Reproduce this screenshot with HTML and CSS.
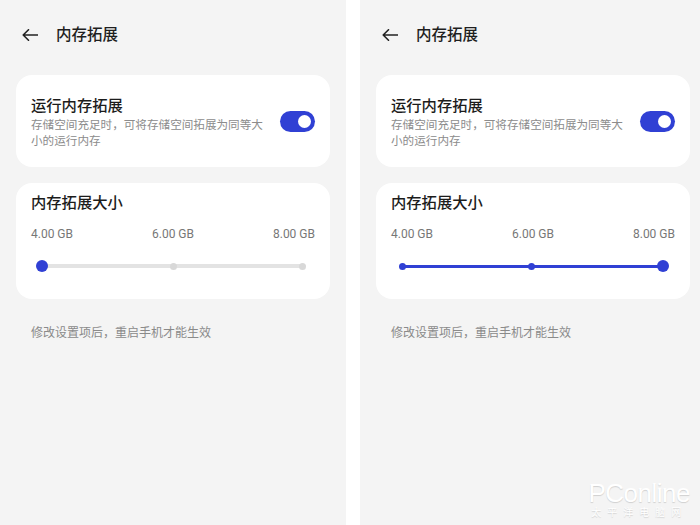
FILE: index.html
```html
<!DOCTYPE html>
<html lang="zh-CN">
<head>
<meta charset="UTF-8">
<meta name="viewport" content="width=device-width, initial-scale=1.0">
<title>内存拓展</title>
<link rel="stylesheet" href="styles.css">
</head>
<body>

<div class="compare">
    <section class="screen screen-left">
        <header class="topbar">
            <svg class="back" width="16" height="12" viewBox="0 0 16 12">
                <path d="M15.5 6H1.2M6.5 0.8L1.2 6l5.3 5.2" fill="none" stroke="#222" stroke-width="1.6" stroke-linecap="round" stroke-linejoin="round"/>
            </svg>
            <h1>内存拓展</h1>
        </header>

        <div class="card card-switch">
            <div class="switch-text">
                <h2>运行内存拓展</h2>
                <p>存储空间充足时，可将存储空间拓展为同等大小的运行内存</p>
            </div>
            <span class="toggle"><span class="knob"></span></span>
        </div>

        <div class="card card-size">
            <h2>内存拓展大小</h2>
            <div class="labels">
                <span>4.00 GB</span>
                <span>6.00 GB</span>
                <span>8.00 GB</span>
            </div>
            <div class="slider">
                <span class="dot dot-active"></span>
                <span class="dot"></span>
                <span class="dot"></span>
            </div>
        </div>

        <p class="note">修改设置项后，重启手机才能生效</p>
    </section>

    <div class="divider"></div>

    <section class="screen screen-right">
        <header class="topbar">
            <svg class="back" width="16" height="12" viewBox="0 0 16 12">
                <path d="M15.5 6H1.2M6.5 0.8L1.2 6l5.3 5.2" fill="none" stroke="#222" stroke-width="1.6" stroke-linecap="round" stroke-linejoin="round"/>
            </svg>
            <h1>内存拓展</h1>
        </header>

        <div class="card card-switch">
            <div class="switch-text">
                <h2>运行内存拓展</h2>
                <p>存储空间充足时，可将存储空间拓展为同等大小的运行内存</p>
            </div>
            <span class="toggle"><span class="knob"></span></span>
        </div>

        <div class="card card-size">
            <h2>内存拓展大小</h2>
            <div class="labels">
                <span>4.00 GB</span>
                <span>6.00 GB</span>
                <span>8.00 GB</span>
            </div>
            <div class="slider slider-full">
                <span class="dot dot-small"></span>
                <span class="dot dot-small"></span>
                <span class="dot dot-active"></span>
            </div>
        </div>

        <p class="note">修改设置项后，重启手机才能生效</p>

        <div class="watermark">
            <span class="wm-logo">PConline</span>
            <span class="wm-sub">太平洋电脑网</span>
        </div>
    </section>
</div>

</body>
</html>
```

FILE: styles.css
```css
body {
    margin: 0;
    padding: 0;
    font-family: Roboto, "Noto Sans CJK SC", sans-serif;
    background-color: #ffffff;
}

.compare {
    display: flex;
    width: 700px;
    height: 525px;
    overflow: hidden;
}

.screen {
    position: relative;
    background-color: #f4f4f4;
    height: 525px;
    padding: 0 0 0 16px;
    box-sizing: border-box;
}

.screen-left {
    width: 346px;
}

.screen-right {
    width: 340px;
}

.divider {
    width: 14px;
    background-color: #ffffff;
}

.topbar {
    display: flex;
    align-items: center;
    height: 24px;
    padding: 23px 0 0 6px;
    margin-bottom: 28px;
}

.topbar .back {
    display: block;
}

.topbar h1 {
    margin: 0 0 0 18px;
    font-size: 15.5px;
    font-weight: 500;
    line-height: 24px;
    color: #1e1e1e;
}

.card {
    width: 314px;
    box-sizing: border-box;
    background-color: #ffffff;
    border-radius: 16px;
}

.card h2 {
    margin: 0;
    font-size: 15.3px;
    font-weight: 500;
    line-height: 22px;
    color: #1c1c1c;
}

.card-switch {
    display: flex;
    align-items: center;
    height: 92px;
    padding: 0 15px;
}

.switch-text {
    flex: 1;
    padding-right: 10px;
    padding-top: 1px;
}

.switch-text p {
    margin: 0;
    font-size: 11.6px;
    line-height: 16px;
    color: #8c8c8c;
}

.toggle {
    position: relative;
    width: 35px;
    height: 21px;
    border-radius: 11px;
    background-color: #3040d4;
    flex-shrink: 0;
}

.toggle .knob {
    position: absolute;
    top: 4px;
    right: 4px;
    width: 13px;
    height: 13px;
    border-radius: 50%;
    background-color: #ffffff;
}

.card-size {
    margin-top: 16px;
    height: 116px;
    padding: 9px 15px 0;
}

.labels {
    display: flex;
    justify-content: space-between;
    margin-top: 12px;
    font-size: 12px;
    line-height: 16px;
    color: #777777;
}

.slider {
    position: relative;
    display: flex;
    justify-content: space-between;
    align-items: center;
    height: 24px;
    margin: 12px 12px 0 11px;
}

.slider::before {
    content: "";
    position: absolute;
    left: 0;
    right: 0;
    top: 10px;
    height: 4px;
    border-radius: 2px;
    background-color: #e3e3e3;
}

.slider .dot {
    position: relative;
    width: 7px;
    height: 7px;
    border-radius: 50%;
    background-color: #d8d8d8;
}

.slider .dot:first-child {
    margin-left: -3px;
}

.slider .dot:last-child {
    margin-right: -3px;
}

.slider .dot-active {
    width: 12px;
    height: 12px;
    background-color: #3040d4;
}

.slider .dot-active:first-child {
    margin-left: -6px;
}

.slider .dot-active:last-child {
    margin-right: -6px;
}

.slider-full::before {
    top: 10.5px;
    height: 3px;
    background-color: #3040d4;
}

.slider-full .dot-small {
    background-color: #3040d4;
}

.note {
    margin: 25px 0 0 15px;
    font-size: 12px;
    line-height: 18px;
    color: #8a8a8a;
}

.watermark {
    position: absolute;
    right: 10px;
    bottom: 6px;
    display: flex;
    flex-direction: column;
    align-items: center;
    color: #ffffff;
    text-shadow: 0 1px 1px rgba(0, 0, 0, 0.15);
}

.wm-logo {
    font-family: "Liberation Sans", sans-serif;
    font-size: 26px;
    line-height: 26px;
    letter-spacing: -0.5px;
}

.wm-sub {
    font-size: 10px;
    line-height: 13px;
    letter-spacing: 6px;
}
```
